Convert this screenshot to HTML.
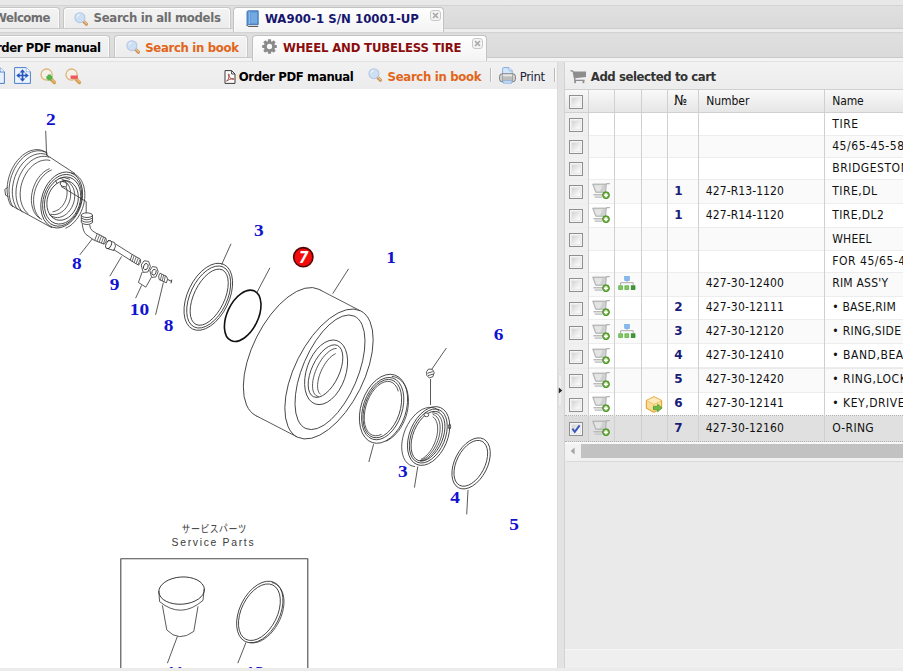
<!DOCTYPE html>
<html lang="en">
<head>
<meta charset="utf-8">
<title>WA900-1 S/N 10001-UP - WHEEL AND TUBELESS TIRE</title>
<style>
html,body{margin:0;padding:0;}
body{width:903px;height:671px;overflow:hidden;background:#e4e4e4;position:relative;font-family:'DejaVu Sans Condensed','Liberation Sans',sans-serif;}
div,span,svg{position:absolute;box-sizing:border-box;}
.t{white-space:nowrap;line-height:20px;height:20px;}
.b{font-weight:bold;font-size:13px;}
.r{font-size:12px;color:#111;}
.n{font-family:'DejaVu Sans','Liberation Sans',sans-serif;font-weight:bold;font-size:12px;color:#1b1b78;}
.tab{border:1px solid #c6c6c6;border-bottom-color:#cbcbcb;border-radius:4px 4px 0 0;background:linear-gradient(#f3f3f3,#ececec);box-shadow:inset 0 1px 0 #fff, inset 1px 0 0 #fafafa, inset -1px 0 0 #fafafa;}
.tab.act{background:linear-gradient(#ffffff,#f3f3f3);border-color:#c2c2c2;border-bottom:none;}
.cls{width:11px;height:11px;border:1px solid #c9c9c9;border-radius:3px;background:#f4f4f4;}
.cb{width:14px;height:14px;border:1px solid #8f8f8f;background:#f4f4f4;}
.cb:before{content:"";position:absolute;left:1px;top:1px;right:1px;bottom:1px;border:1px solid #e9e9e9;background:linear-gradient(135deg,#d2d2d2 0%,#f7f7f7 80%);}
.vl{width:1px;background:#d0d0d0;}
.hl{height:1px;background:#ededed;}
.sep{width:1px;height:14px;background:#b9b9b9;box-shadow:1px 0 0 #fafafa;}
</style>
</head>
<body>
<div style="left:0;top:0;width:903px;height:6px;background:#e8e8e8;border-bottom:1px solid #d3d3d3"></div>
<div style="left:0;top:6px;width:903px;height:23px;background:linear-gradient(#e0e0e0,#dadada);border-bottom:1px solid #cdcdcd"></div>
<div style="left:0;top:29px;width:903px;height:3px;background:#ededed"></div>
<div style="left:0;top:32px;width:903px;height:2px;background:#d4d4d4;border-bottom:1px solid #dcdcdc"></div>
<div style="left:0;top:34px;width:903px;height:24px;background:linear-gradient(#e0e0e0,#dadada);border-bottom:1px solid #c9c9c9"></div>
<div style="left:0;top:58px;width:903px;height:4px;background:#f4f4f4;border-bottom:1px solid #e2e2e2"></div>
<div class="tab" style="left:-20px;top:7px;width:80px;height:22px"></div>
<div class="tab" style="left:63px;top:7px;width:168px;height:22px"></div>
<div class="tab act" style="left:233px;top:7px;width:211px;height:25px"></div>
<div class="tab" style="left:-20px;top:35px;width:130px;height:23px"></div>
<div class="tab" style="left:114px;top:35px;width:134px;height:23px"></div>
<div class="tab act" style="left:252px;top:35px;width:235px;height:26px"></div>
<div class="cls" style="left:430px;top:10px"><svg width="9" height="9" viewBox="0 0 9 9" style="left:0;top:0"><path d="M2 2L7 7M7 2L2 7" stroke="#a9a9a9" stroke-width="1.7" fill="none"/></svg></div>
<div class="cls" style="left:472px;top:38px"><svg width="9" height="9" viewBox="0 0 9 9" style="left:0;top:0"><path d="M2 2L7 7M7 2L2 7" stroke="#a9a9a9" stroke-width="1.7" fill="none"/></svg></div>
<div style="left:0;top:62px;width:557px;height:27px;background:linear-gradient(#f1f1f1,#ececec)"></div>
<div style="left:0;top:89px;width:557px;height:579px;background:#fff"></div>
<div class="sep" style="left:490px;top:68px"></div>
<div class="sep" style="left:554px;top:68px"></div>
<div style="left:557px;top:62px;width:7px;height:606px;background:#e3e3e3;border-left:1px solid #dadada"></div>
<div style="left:564px;top:62px;width:339px;height:606px;background:#eaeaea;border-left:1px solid #d3d3d3"></div><div style="left:565px;top:649px;width:338px;height:19px;background:#efefef;border-top:1px solid #f6f6f6"></div>
<div style="left:565px;top:62px;width:338px;height:27px;background:linear-gradient(#f3f3f3,#ececec)"></div>
<div style="left:565px;top:89px;width:338px;height:24px;background:linear-gradient(#f9f9f9,#e6e6e6);border-top:1px solid #d0d0d0;border-bottom:1px solid #d0d0d0"></div>
<div style="left:565px;top:113px;width:338px;height:22.5px;background:#fff;border-bottom:1px solid #ededed"></div>
<div style="left:565px;top:113px;width:23px;height:21.5px;background:#f0f0f0"></div>
<div class="cb" style="left:569px;top:118px"></div>
<div style="left:565px;top:135.5px;width:338px;height:22px;background:#fafafa;border-bottom:1px solid #ededed"></div>
<div style="left:565px;top:135.5px;width:23px;height:21px;background:#f0f0f0"></div>
<div class="cb" style="left:569px;top:140px"></div>
<div style="left:565px;top:157.5px;width:338px;height:22.2px;background:#fff;border-bottom:1px solid #ededed"></div>
<div style="left:565px;top:157.5px;width:23px;height:21.2px;background:#f0f0f0"></div>
<div class="cb" style="left:569px;top:162px"></div>
<div style="left:565px;top:179.7px;width:338px;height:23.9px;background:#fafafa;border-bottom:1px solid #ededed"></div>
<div style="left:565px;top:179.7px;width:23px;height:22.9px;background:#f0f0f0"></div>
<div class="cb" style="left:569px;top:185px"></div>
<svg style="left:591.5px;top:183px" width="18" height="17" viewBox="0 0 18 17"><path d="M0.7 1.1H14.3L13.6 9.3H3.7Z" fill="#cfd0cf" stroke="#a9aba9" stroke-width="0.9" stroke-linejoin="round"/><path d="M2.2 2.2H10.5L8 8.2H4.4Z" fill="#e4e5e4"/><path d="M14 1.6L15 0.5H17.3" stroke="#b3b5b3" stroke-width="1.4" fill="none" stroke-linecap="round"/><path d="M2 11.7H12.6" stroke="#b9bbb9" stroke-width="1.6" stroke-linecap="round"/><path d="M3.2 14.1H9.6" stroke="#c9cbc9" stroke-width="1.6" stroke-linecap="round"/><circle cx="14" cy="12.2" r="3.4" fill="#78b848" stroke="#4a8a26" stroke-width="1"/><path d="M14 10.2V14.2M12 12.2H16" stroke="#fff" stroke-width="1.5"/></svg>
<div style="left:565px;top:203.6px;width:338px;height:24.4px;background:#fff;border-bottom:1px solid #ededed"></div>
<div style="left:565px;top:203.6px;width:23px;height:23.4px;background:#f0f0f0"></div>
<div class="cb" style="left:569px;top:209px"></div>
<svg style="left:591.5px;top:207px" width="18" height="17" viewBox="0 0 18 17"><path d="M0.7 1.1H14.3L13.6 9.3H3.7Z" fill="#cfd0cf" stroke="#a9aba9" stroke-width="0.9" stroke-linejoin="round"/><path d="M2.2 2.2H10.5L8 8.2H4.4Z" fill="#e4e5e4"/><path d="M14 1.6L15 0.5H17.3" stroke="#b3b5b3" stroke-width="1.4" fill="none" stroke-linecap="round"/><path d="M2 11.7H12.6" stroke="#b9bbb9" stroke-width="1.6" stroke-linecap="round"/><path d="M3.2 14.1H9.6" stroke="#c9cbc9" stroke-width="1.6" stroke-linecap="round"/><circle cx="14" cy="12.2" r="3.4" fill="#78b848" stroke="#4a8a26" stroke-width="1"/><path d="M14 10.2V14.2M12 12.2H16" stroke="#fff" stroke-width="1.5"/></svg>
<div style="left:565px;top:228px;width:338px;height:23.1px;background:#fafafa;border-bottom:1px solid #ededed"></div>
<div style="left:565px;top:228px;width:23px;height:22.1px;background:#f0f0f0"></div>
<div class="cb" style="left:569px;top:233px"></div>
<div style="left:565px;top:251.1px;width:338px;height:21.7px;background:#fff;border-bottom:1px solid #ededed"></div>
<div style="left:565px;top:251.1px;width:23px;height:20.7px;background:#f0f0f0"></div>
<div class="cb" style="left:569px;top:255px"></div>
<div style="left:565px;top:272.8px;width:338px;height:23.8px;background:#fafafa;border-bottom:1px solid #ededed"></div>
<div style="left:565px;top:272.8px;width:23px;height:22.8px;background:#f0f0f0"></div>
<div class="cb" style="left:569px;top:278px"></div>
<svg style="left:591.5px;top:276px" width="18" height="17" viewBox="0 0 18 17"><path d="M0.7 1.1H14.3L13.6 9.3H3.7Z" fill="#cfd0cf" stroke="#a9aba9" stroke-width="0.9" stroke-linejoin="round"/><path d="M2.2 2.2H10.5L8 8.2H4.4Z" fill="#e4e5e4"/><path d="M14 1.6L15 0.5H17.3" stroke="#b3b5b3" stroke-width="1.4" fill="none" stroke-linecap="round"/><path d="M2 11.7H12.6" stroke="#b9bbb9" stroke-width="1.6" stroke-linecap="round"/><path d="M3.2 14.1H9.6" stroke="#c9cbc9" stroke-width="1.6" stroke-linecap="round"/><circle cx="14" cy="12.2" r="3.4" fill="#78b848" stroke="#4a8a26" stroke-width="1"/><path d="M14 10.2V14.2M12 12.2H16" stroke="#fff" stroke-width="1.5"/></svg>
<svg style="left:617.7px;top:276px" width="18" height="15" viewBox="0 0 18 15"><rect x="6.7" y="0.4" width="4.6" height="4.2" fill="#86b9f0" stroke="#6a9fe0" stroke-width="0.6"/><path d="M9 4.8V6.6M2.6 9.2V6.7H15.2V9.2" stroke="#ababab" stroke-width="1" fill="none"/><rect x="0.7" y="9.8" width="3.8" height="3.8" fill="#7fc862" stroke="#5aac3e" stroke-width="0.7"/><rect x="6.9" y="9.8" width="3.8" height="3.8" fill="#7fc862" stroke="#5aac3e" stroke-width="0.7"/><rect x="13.2" y="9.8" width="3.8" height="3.8" fill="#3f9a35" stroke="#2f7f28" stroke-width="0.7"/></svg>
<div style="left:565px;top:296.6px;width:338px;height:23.7px;background:#fff;border-bottom:1px solid #ededed"></div>
<div style="left:565px;top:296.6px;width:23px;height:22.7px;background:#f0f0f0"></div>
<div class="cb" style="left:569px;top:302px"></div>
<svg style="left:591.5px;top:300px" width="18" height="17" viewBox="0 0 18 17"><path d="M0.7 1.1H14.3L13.6 9.3H3.7Z" fill="#cfd0cf" stroke="#a9aba9" stroke-width="0.9" stroke-linejoin="round"/><path d="M2.2 2.2H10.5L8 8.2H4.4Z" fill="#e4e5e4"/><path d="M14 1.6L15 0.5H17.3" stroke="#b3b5b3" stroke-width="1.4" fill="none" stroke-linecap="round"/><path d="M2 11.7H12.6" stroke="#b9bbb9" stroke-width="1.6" stroke-linecap="round"/><path d="M3.2 14.1H9.6" stroke="#c9cbc9" stroke-width="1.6" stroke-linecap="round"/><circle cx="14" cy="12.2" r="3.4" fill="#78b848" stroke="#4a8a26" stroke-width="1"/><path d="M14 10.2V14.2M12 12.2H16" stroke="#fff" stroke-width="1.5"/></svg>
<div style="left:565px;top:320.3px;width:338px;height:24.1px;background:#fafafa;border-bottom:1px solid #ededed"></div>
<div style="left:565px;top:320.3px;width:23px;height:23.1px;background:#f0f0f0"></div>
<div class="cb" style="left:569px;top:326px"></div>
<svg style="left:591.5px;top:324px" width="18" height="17" viewBox="0 0 18 17"><path d="M0.7 1.1H14.3L13.6 9.3H3.7Z" fill="#cfd0cf" stroke="#a9aba9" stroke-width="0.9" stroke-linejoin="round"/><path d="M2.2 2.2H10.5L8 8.2H4.4Z" fill="#e4e5e4"/><path d="M14 1.6L15 0.5H17.3" stroke="#b3b5b3" stroke-width="1.4" fill="none" stroke-linecap="round"/><path d="M2 11.7H12.6" stroke="#b9bbb9" stroke-width="1.6" stroke-linecap="round"/><path d="M3.2 14.1H9.6" stroke="#c9cbc9" stroke-width="1.6" stroke-linecap="round"/><circle cx="14" cy="12.2" r="3.4" fill="#78b848" stroke="#4a8a26" stroke-width="1"/><path d="M14 10.2V14.2M12 12.2H16" stroke="#fff" stroke-width="1.5"/></svg>
<svg style="left:617.7px;top:324px" width="18" height="15" viewBox="0 0 18 15"><rect x="6.7" y="0.4" width="4.6" height="4.2" fill="#86b9f0" stroke="#6a9fe0" stroke-width="0.6"/><path d="M9 4.8V6.6M2.6 9.2V6.7H15.2V9.2" stroke="#ababab" stroke-width="1" fill="none"/><rect x="0.7" y="9.8" width="3.8" height="3.8" fill="#7fc862" stroke="#5aac3e" stroke-width="0.7"/><rect x="6.9" y="9.8" width="3.8" height="3.8" fill="#7fc862" stroke="#5aac3e" stroke-width="0.7"/><rect x="13.2" y="9.8" width="3.8" height="3.8" fill="#3f9a35" stroke="#2f7f28" stroke-width="0.7"/></svg>
<div style="left:565px;top:344.4px;width:338px;height:24.1px;background:#fff;border-bottom:1px solid #ededed"></div>
<div style="left:565px;top:344.4px;width:23px;height:23.1px;background:#f0f0f0"></div>
<div class="cb" style="left:569px;top:350px"></div>
<svg style="left:591.5px;top:348px" width="18" height="17" viewBox="0 0 18 17"><path d="M0.7 1.1H14.3L13.6 9.3H3.7Z" fill="#cfd0cf" stroke="#a9aba9" stroke-width="0.9" stroke-linejoin="round"/><path d="M2.2 2.2H10.5L8 8.2H4.4Z" fill="#e4e5e4"/><path d="M14 1.6L15 0.5H17.3" stroke="#b3b5b3" stroke-width="1.4" fill="none" stroke-linecap="round"/><path d="M2 11.7H12.6" stroke="#b9bbb9" stroke-width="1.6" stroke-linecap="round"/><path d="M3.2 14.1H9.6" stroke="#c9cbc9" stroke-width="1.6" stroke-linecap="round"/><circle cx="14" cy="12.2" r="3.4" fill="#78b848" stroke="#4a8a26" stroke-width="1"/><path d="M14 10.2V14.2M12 12.2H16" stroke="#fff" stroke-width="1.5"/></svg>
<div style="left:565px;top:368.5px;width:338px;height:24.1px;background:#fafafa;border-bottom:1px solid #ededed"></div>
<div style="left:565px;top:368.5px;width:23px;height:23.1px;background:#f0f0f0"></div>
<div class="cb" style="left:569px;top:374px"></div>
<svg style="left:591.5px;top:372px" width="18" height="17" viewBox="0 0 18 17"><path d="M0.7 1.1H14.3L13.6 9.3H3.7Z" fill="#cfd0cf" stroke="#a9aba9" stroke-width="0.9" stroke-linejoin="round"/><path d="M2.2 2.2H10.5L8 8.2H4.4Z" fill="#e4e5e4"/><path d="M14 1.6L15 0.5H17.3" stroke="#b3b5b3" stroke-width="1.4" fill="none" stroke-linecap="round"/><path d="M2 11.7H12.6" stroke="#b9bbb9" stroke-width="1.6" stroke-linecap="round"/><path d="M3.2 14.1H9.6" stroke="#c9cbc9" stroke-width="1.6" stroke-linecap="round"/><circle cx="14" cy="12.2" r="3.4" fill="#78b848" stroke="#4a8a26" stroke-width="1"/><path d="M14 10.2V14.2M12 12.2H16" stroke="#fff" stroke-width="1.5"/></svg>
<div style="left:565px;top:392.6px;width:338px;height:23.6px;background:#fff;border-bottom:1px solid #ededed"></div>
<div style="left:565px;top:392.6px;width:23px;height:22.6px;background:#f0f0f0"></div>
<div class="cb" style="left:569px;top:398px"></div>
<svg style="left:591.5px;top:396px" width="18" height="17" viewBox="0 0 18 17"><path d="M0.7 1.1H14.3L13.6 9.3H3.7Z" fill="#cfd0cf" stroke="#a9aba9" stroke-width="0.9" stroke-linejoin="round"/><path d="M2.2 2.2H10.5L8 8.2H4.4Z" fill="#e4e5e4"/><path d="M14 1.6L15 0.5H17.3" stroke="#b3b5b3" stroke-width="1.4" fill="none" stroke-linecap="round"/><path d="M2 11.7H12.6" stroke="#b9bbb9" stroke-width="1.6" stroke-linecap="round"/><path d="M3.2 14.1H9.6" stroke="#c9cbc9" stroke-width="1.6" stroke-linecap="round"/><circle cx="14" cy="12.2" r="3.4" fill="#78b848" stroke="#4a8a26" stroke-width="1"/><path d="M14 10.2V14.2M12 12.2H16" stroke="#fff" stroke-width="1.5"/></svg>
<svg style="left:644.8px;top:396px" width="18" height="17" viewBox="0 0 18 17"><path d="M9 0.8L16.6 4.6V12.2L9 16.2L1.4 12.2V4.6Z" fill="#f9dd97" stroke="#e3a93c" stroke-width="1.2" stroke-linejoin="round"/><path d="M9 0.8L16.6 4.6L9 8.4L1.4 4.6Z" fill="#fcebbf" stroke="#e9b957" stroke-width="0.7"/><path d="M9 8.4V16" stroke="#e9b957" stroke-width="0.7"/><path d="M8.4 10.4H12.6V8.2L17 12L12.6 15.8V13.6H8.4Z" fill="#6cb947" stroke="#4d9a2c" stroke-width="0.8" stroke-linejoin="round"/></svg>
<div style="left:565px;top:416.2px;width:338px;height:25.4px;background:#e0e0e0;border-bottom:1px dotted #b0b0b0"></div>
<div style="left:565px;top:415.2px;width:338px;height:1px;border-top:1px dotted #b0b0b0"></div>
<div style="left:565px;top:416.2px;width:23px;height:24.4px;background:#dcdcdc"></div>
<div class="cb" style="left:569px;top:422px"></div>
<svg style="left:591.5px;top:420px" width="18" height="17" viewBox="0 0 18 17"><path d="M0.7 1.1H14.3L13.6 9.3H3.7Z" fill="#cfd0cf" stroke="#a9aba9" stroke-width="0.9" stroke-linejoin="round"/><path d="M2.2 2.2H10.5L8 8.2H4.4Z" fill="#e4e5e4"/><path d="M14 1.6L15 0.5H17.3" stroke="#b3b5b3" stroke-width="1.4" fill="none" stroke-linecap="round"/><path d="M2 11.7H12.6" stroke="#b9bbb9" stroke-width="1.6" stroke-linecap="round"/><path d="M3.2 14.1H9.6" stroke="#c9cbc9" stroke-width="1.6" stroke-linecap="round"/><circle cx="14" cy="12.2" r="3.4" fill="#78b848" stroke="#4a8a26" stroke-width="1"/><path d="M14 10.2V14.2M12 12.2H16" stroke="#fff" stroke-width="1.5"/></svg>
<svg style="left:569px;top:422px" width="14" height="14" viewBox="0 0 14 14"><path d="M3.4 6.6L5.8 9.8L10.6 3.4" stroke="#3a57b8" stroke-width="1.9" fill="none"/></svg>
<div class="cb" style="left:569px;top:95px"></div>
<div class="vl" style="left:588px;top:90px;height:351px"></div>
<div class="vl" style="left:614px;top:90px;height:351px"></div>
<div class="vl" style="left:641px;top:90px;height:351px"></div>
<div class="vl" style="left:667px;top:90px;height:351px"></div>
<div class="vl" style="left:698px;top:90px;height:351px"></div>
<div class="vl" style="left:824px;top:90px;height:351px"></div>
<div style="left:565px;top:442px;width:338px;height:2px;background:#f8f8f8"></div>
<div style="left:565px;top:443.5px;width:338px;height:14px;background:#c2c2c2"></div>
<div style="left:565px;top:443.5px;width:16px;height:14px;background:#f2f2f2"></div>
<svg style="left:569.6px;top:446.5px" width="6" height="8" viewBox="0 0 6 8"><path d="M4.6 0.4L0.6 4L4.6 7.6Z" fill="#a6a6a6"/></svg>
<div style="left:565px;top:457.5px;width:338px;height:3px;background:#f1f1f1"></div>
<div style="left:566px;top:460.5px;width:337px;height:1px;background:#d9d9d9"></div>
<div style="left:0;top:668px;width:903px;height:3px;background:#ebebeb"></div>
<svg style="left:558px;top:373px" width="5" height="35" viewBox="0 0 5 35"><path d="M0.5 0.5L3.8 3.5V31.5L0.5 34.5Z" fill="#eeeeee" stroke="#d6d6d6" stroke-width="0.6"/><path d="M0.8 14.5L4.2 17.5L0.8 20.5Z" fill="#222"/></svg>
<svg style="left:74px;top:11.5px" width="15" height="14" viewBox="0 0 15 14"><path d="M9.6 9.4L12.4 12.2" stroke="#c98f52" stroke-width="3.2" stroke-linecap="round"/><path d="M10 9.2L12.8 12" stroke="#ecc692" stroke-width="1.1" stroke-linecap="round"/><circle cx="5.9" cy="5.7" r="5" fill="#cddff3" stroke="#b4c8e6" stroke-width="1.1"/><path d="M2.9 5.4A3.1 3.1 0 0 1 5.8 2.6" stroke="#e9f1fa" stroke-width="1.2" fill="none"/></svg>
<svg style="left:126px;top:40px" width="15" height="14" viewBox="0 0 15 14"><path d="M9.6 9.4L12.4 12.2" stroke="#c98f52" stroke-width="3.2" stroke-linecap="round"/><path d="M10 9.2L12.8 12" stroke="#ecc692" stroke-width="1.1" stroke-linecap="round"/><circle cx="5.9" cy="5.7" r="5" fill="#cddff3" stroke="#b4c8e6" stroke-width="1.1"/><path d="M2.9 5.4A3.1 3.1 0 0 1 5.8 2.6" stroke="#e9f1fa" stroke-width="1.2" fill="none"/></svg>
<svg style="left:368.3px;top:68.3px" width="15" height="14" viewBox="0 0 15 14"><path d="M9.6 9.4L12.4 12.2" stroke="#c98f52" stroke-width="3.2" stroke-linecap="round"/><path d="M10 9.2L12.8 12" stroke="#ecc692" stroke-width="1.1" stroke-linecap="round"/><circle cx="5.9" cy="5.7" r="5" fill="#cddff3" stroke="#b4c8e6" stroke-width="1.1"/><path d="M2.9 5.4A3.1 3.1 0 0 1 5.8 2.6" stroke="#e9f1fa" stroke-width="1.2" fill="none"/></svg>
<svg style="left:245.5px;top:10px" width="13" height="17" viewBox="0 0 13 17"><path d="M1 2.2Q1 0.8 2.4 0.8H12.2V14.6H2.6Q1 14.6 1 15.6Z" fill="#5d97d6" stroke="#3b6fb2" stroke-width="0.9"/><path d="M3.4 1.4V14" stroke="#8ab8ea" stroke-width="1.2"/><rect x="4.6" y="2.6" width="6.4" height="10.6" fill="#74a9e2"/><path d="M1.2 15.4Q1.6 16.4 2.8 16.4H12.2" stroke="#4a4a4a" stroke-width="1" fill="none"/></svg>
<svg style="left:261.5px;top:38.5px" width="15" height="15" viewBox="0 0 15 15"><g transform="translate(7.5 7.5)"><rect x="-1.6" y="-7.3" width="3.2" height="3.4" rx="0.5" transform="rotate(0)" fill="#8a8a8a"/><rect x="-1.6" y="-7.3" width="3.2" height="3.4" rx="0.5" transform="rotate(45)" fill="#8a8a8a"/><rect x="-1.6" y="-7.3" width="3.2" height="3.4" rx="0.5" transform="rotate(90)" fill="#8a8a8a"/><rect x="-1.6" y="-7.3" width="3.2" height="3.4" rx="0.5" transform="rotate(135)" fill="#8a8a8a"/><rect x="-1.6" y="-7.3" width="3.2" height="3.4" rx="0.5" transform="rotate(180)" fill="#8a8a8a"/><rect x="-1.6" y="-7.3" width="3.2" height="3.4" rx="0.5" transform="rotate(225)" fill="#8a8a8a"/><rect x="-1.6" y="-7.3" width="3.2" height="3.4" rx="0.5" transform="rotate(270)" fill="#8a8a8a"/><rect x="-1.6" y="-7.3" width="3.2" height="3.4" rx="0.5" transform="rotate(315)" fill="#8a8a8a"/><circle r="4.1" fill="none" stroke="#8a8a8a" stroke-width="2.9"/></g></svg>
<svg style="left:223.6px;top:69.6px" width="12" height="14" viewBox="0 0 12 14"><path d="M1 0.6H7.6L11 4V13.4H1Z" fill="#fbfbfb" stroke="#3c3c3c" stroke-width="1"/><path d="M7.6 0.6V4H11" fill="none" stroke="#3c3c3c" stroke-width="0.9"/><path d="M2.6 11.2C4.4 9.6 5.6 6.6 5.2 4.4C5 3.6 4.2 3.8 4.4 4.8C4.8 7.2 7 9.2 9.4 9.4C10.4 9.5 10.2 8.6 9.2 8.6C7 8.6 4 10 2.6 11.2Z" fill="none" stroke="#9a2a2a" stroke-width="0.8"/></svg>
<svg style="left:499px;top:67px" width="17" height="17" viewBox="0 0 17 17"><path d="M3.6 8V1.4Q3.6 0.6 4.4 0.6H10L13.2 3.8V8Z" fill="#d4e6fa" stroke="#7ba7dc" stroke-width="0.9"/><path d="M10 0.8V3.8H13" fill="#eef5fd" stroke="#7ba7dc" stroke-width="0.7"/><rect x="0.6" y="6.8" width="15.8" height="8" rx="2.6" fill="#d9d9d9" stroke="#6e6e6e" stroke-width="0.9"/><rect x="3.4" y="7.4" width="10.2" height="6.6" fill="#bdbdbd"/><rect x="3.4" y="7.4" width="10.2" height="2" fill="#e6e6e6"/><path d="M3.4 7.2V14.2M13.6 7.2V14.2" stroke="#8c8c8c" stroke-width="0.7"/><path d="M3.8 13.8H13.2L12.6 16.2H4.4Z" fill="#d4e6fa" stroke="#7ba7dc" stroke-width="0.8"/></svg>
<svg style="left:569.6px;top:69.6px" width="17" height="14" viewBox="0 0 17 14"><path d="M0.4 0.9H2.6L3.4 2.2" stroke="#8d8d8d" stroke-width="1.2" fill="none"/><path d="M3 1.6H16V7L4.6 8.2Z" fill="#8d8d8d"/><path d="M3.4 2.4L5 10.4H14.6" stroke="#8d8d8d" stroke-width="1.4" fill="none"/><rect x="4.2" y="10.4" width="1.7" height="2.8" fill="#8d8d8d"/><rect x="12.6" y="10.4" width="1.7" height="2.8" fill="#8d8d8d"/></svg>
<svg style="left:-8.6px;top:67px" width="14" height="17" viewBox="0 0 14 17"><path d="M0.6 0.6H9L13.4 5V16.4H0.6Z" fill="#e7f0fc" stroke="#4d7fcb" stroke-width="1"/><path d="M9 0.6V5H13.4" fill="#f6faff" stroke="#4d7fcb" stroke-width="0.9"/></svg>
<svg style="left:14px;top:67px" width="17" height="17" viewBox="0 0 17 17"><path d="M0.6 0.6H12.2L16.4 4.8V16.4H0.6Z" fill="#edf4fd" stroke="#4d7fcb" stroke-width="1"/><path d="M12.2 0.6V4.8H16.4" fill="#f8fbff" stroke="#8fb0e0" stroke-width="0.8"/><path d="M8.5 4.2V12.8M4.2 8.5H12.8" stroke="#2458be" stroke-width="1.7"/><path d="M8.5 2.2L11.3 5.6H5.7ZM8.5 14.8L11.3 11.4H5.7ZM2.2 8.5L5.6 5.7V11.3ZM14.8 8.5L11.4 5.7V11.3Z" fill="#2458be"/></svg>
<svg style="left:40px;top:67.6px" width="17" height="17" viewBox="0 0 17 17"><path d="M11.2 11.2L14.4 14.4" stroke="#d89c50" stroke-width="3.6" stroke-linecap="round"/><path d="M11.4 10.8L14.8 14.2" stroke="#f0cc96" stroke-width="1" stroke-linecap="round"/><circle cx="6.6" cy="6.6" r="5.6" fill="#f4f1ea" stroke="#dbb67c" stroke-width="1.3"/><path d="M9.4 6.6V12.6M6.4 9.6H12.4" stroke="#55b34a" stroke-width="3.4"/></svg>
<svg style="left:65px;top:67.6px" width="17" height="17" viewBox="0 0 17 17"><path d="M11.2 11.2L14.4 14.4" stroke="#d89c50" stroke-width="3.6" stroke-linecap="round"/><path d="M11.4 10.8L14.8 14.2" stroke="#f0cc96" stroke-width="1" stroke-linecap="round"/><circle cx="6.6" cy="6.6" r="5.6" fill="#f4f1ea" stroke="#dbb67c" stroke-width="1.3"/><path d="M5.6 9.2H12.8" stroke="#f0565f" stroke-width="3.4"/></svg>
<svg style="left:0;top:89px" width="557" height="578.5" viewBox="0 89 557 578.5"><ellipse cx="287.5" cy="352.5" rx="34.5" ry="70.6" transform="rotate(26.6 287.5 352.5)" fill="#fff" stroke="#303030" stroke-width="0.8" /><path d="M297.2 437.0 L255.7 415.5 L319.2 289.5 L360.7 311.0 Z" fill="#fff" stroke="none"/><path d="M297.2 437.0 L255.7 415.5" stroke="#303030" stroke-width="0.8" fill="none"/><path d="M360.7 311.0 L319.2 289.5" stroke="#303030" stroke-width="0.8" fill="none"/><ellipse cx="329.0" cy="374.0" rx="34.5" ry="70.6" transform="rotate(26.6 329.0 374.0)" fill="#fff" stroke="#303030" stroke-width="0.8" /><ellipse cx="330.0" cy="372.3" rx="27.6" ry="61.2" transform="rotate(23.2 330.0 372.3)" fill="none" stroke="#303030" stroke-width="0.8" /><ellipse cx="326.1" cy="372.3" rx="19.6" ry="33.5" transform="rotate(19.1 326.1 372.3)" fill="none" stroke="#303030" stroke-width="0.8" /><ellipse cx="325.5" cy="371.1" rx="13.8" ry="28.3" transform="rotate(25.1 325.5 371.1)" fill="none" stroke="#303030" stroke-width="0.8" /><path d="M318.7 396.6 L317.2 396.2 L315.8 395.4 L314.7 394.2 L313.8 392.7 L313.1 390.8 L312.7 388.6 L312.5 386.2 L312.6 383.5 L312.9 380.7 L313.5 377.7 L314.3 374.7 L315.3 371.6 L316.6 368.5 L318.0 365.5 L319.6 362.6 L321.3 359.9 L323.2 357.3 L325.1 355.1 L327.1 353.1 L329.1 351.4 L331.1 350.1 L333.0 349.1 L334.9 348.6 L336.6 348.4" fill="none" stroke="#303030" stroke-width="0.8"/><path d="M320.5 394.3 L319.6 393.5 L318.9 392.5 L318.4 391.3 L317.9 389.8 L317.7 388.2 L317.6 386.4 L317.6 384.5 L317.8 382.4 L318.2 380.3 L318.7 378.0 L319.3 375.8 L320.1 373.5 L321.1 371.2 L322.1 368.9 L323.3 366.7 L324.5 364.6 L325.8 362.7 L327.2 360.8 L328.6 359.1 L330.0 357.6 L331.5 356.3 L332.9 355.2 L334.4 354.3 L335.7 353.6" fill="none" stroke="#303030" stroke-width="0.8"/><path d="M348.6 268.8 L332.7 293.7" stroke="#303030" stroke-width="0.8" fill="none"/><ellipse cx="208.3" cy="296.8" rx="20.7" ry="35.9" transform="rotate(25.8 208.3 296.8)" fill="none" stroke="#303030" stroke-width="0.8" /><ellipse cx="208.7" cy="297.0" rx="18.4" ry="33.3" transform="rotate(25.8 208.7 297.0)" fill="none" stroke="#303030" stroke-width="0.8" /><ellipse cx="209.2" cy="297.2" rx="15.3" ry="30.3" transform="rotate(25.8 209.2 297.2)" fill="none" stroke="#303030" stroke-width="0.8" /><path d="M231.0 243.8 L221.6 264.6" stroke="#303030" stroke-width="0.8" fill="none"/><ellipse cx="242.7" cy="315.8" rx="15.5" ry="27.4" transform="rotate(25.4 242.7 315.8)" fill="none" stroke="#111" stroke-width="1.6" /><path d="M269.9 267.8 L257.0 292.3" stroke="#303030" stroke-width="0.8" fill="none"/><circle cx="303.3" cy="257.2" r="9.6" fill="#f40b0b" stroke="#520606" stroke-width="1.6"/><text transform="translate(303.5 263.1) scale(0.84 1)" text-anchor="middle" font-family="'DejaVu Sans','Liberation Sans',sans-serif" font-weight="bold" font-style="italic" font-size="16.6" fill="#fff">7</text><ellipse cx="383.5" cy="408.8" rx="22.5" ry="35.6" transform="rotate(18.5 383.5 408.8)" fill="none" stroke="#303030" stroke-width="0.8" /><ellipse cx="382.7" cy="408.6" rx="19.5" ry="32.2" transform="rotate(18.5 382.7 408.6)" fill="none" stroke="#303030" stroke-width="0.8" /><ellipse cx="382.3" cy="408.6" rx="17.7" ry="30.2" transform="rotate(18.5 382.3 408.6)" fill="none" stroke="#303030" stroke-width="0.8" /><path d="M381.5 434.3 L378.4 435.5 L375.3 435.8 L372.5 435.2 L369.9 433.8 L367.8 431.5 L366.1 428.4 L364.9 424.7 L364.3 420.5 L364.3 415.9 L364.8 411.0 L365.9 406.1 L367.5 401.2 L369.6 396.6 L372.1 392.4 L374.9 388.7 L377.9 385.7 L381.1 383.4 L384.3 382.0 L387.4 381.4 L390.3 381.7 L392.9 382.9 L395.2 385.0 L397.0 387.8 L398.3 391.4" fill="none" stroke="#303030" stroke-width="0.8"/><path d="M391.8 376.4 L394.4 376.8 L396.8 377.6 L399.1 378.9 L401.2 380.6 L403.1 382.6 L404.7 385.1 L406.1 387.8 L407.2 390.9 L407.9 394.2 L408.4 397.7 L408.5 401.4 L408.3 405.2 L407.8 409.0 L407.0 412.9 L405.9 416.7 L404.5 420.4 L402.8 424.0 L400.9 427.4 L398.8 430.5 L396.4 433.3 L394.0 435.9 L391.3 438.0 L388.7 439.8 L385.9 441.2" fill="none" stroke="#303030" stroke-width="0.8"/><path d="M373.6 444.2 L368.8 462.0" stroke="#303030" stroke-width="0.8" fill="none"/><path d="M415.1 466.6 L412.2 466.0 L409.6 464.9 L407.2 463.0 L405.2 460.6 L403.7 457.7 L402.5 454.2 L401.9 450.4 L401.7 446.3 L402.0 441.9 L402.8 437.5 L404.0 433.0 L405.7 428.6 L407.8 424.4 L410.2 420.5 L413.0 417.0 L415.9 413.9 L419.0 411.4 L422.2 409.4 L425.5 408.1 L428.6 407.4 L431.7 407.4 L434.5 408.1 L437.1 409.4 L439.4 411.4" fill="none" stroke="#303030" stroke-width="0.8"/><ellipse cx="428.6" cy="436.0" rx="19.0" ry="30.8" transform="rotate(22.5 428.6 436.0)" fill="none" stroke="#303030" stroke-width="0.8" /><ellipse cx="428.3" cy="436.0" rx="16.8" ry="28.4" transform="rotate(22.5 428.3 436.0)" fill="none" stroke="#303030" stroke-width="0.8" /><ellipse cx="428.0" cy="436.2" rx="14.8" ry="26.2" transform="rotate(22.5 428.0 436.2)" fill="none" stroke="#303030" stroke-width="0.8" /><path d="M432.2 412.8 L434.2 412.9 L436.0 413.4 L437.6 414.3 L439.0 415.6 L440.2 417.3 L441.2 419.3 L441.9 421.6 L442.4 424.1 L442.6 426.9 L442.5 429.8 L442.1 432.9 L441.5 436.0 L440.5 439.2 L439.4 442.3 L438.0 445.3 L436.4 448.2 L434.7 450.8 L432.8 453.3 L430.8 455.4 L428.7 457.3 L426.5 458.8 L424.4 459.9 L422.3 460.6 L420.3 460.9" fill="none" stroke="#303030" stroke-width="0.8"/><path d="M432.7 414.4 L434.3 414.9 L435.7 415.8 L436.9 417.0 L437.9 418.5 L438.8 420.2 L439.5 422.2 L439.9 424.4 L440.1 426.8 L440.1 429.4 L439.9 432.1 L439.4 434.8 L438.8 437.6 L437.9 440.4 L436.8 443.2 L435.6 445.8 L434.2 448.4 L432.6 450.7 L431.0 452.9 L429.2 454.9 L427.4 456.6 L425.5 458.1 L423.6 459.2 L421.8 460.1 L419.9 460.6" fill="none" stroke="#303030" stroke-width="0.8"/><path d="M432.7 416.8 L433.8 417.6 L434.8 418.7 L435.7 420.0 L436.4 421.5 L437.0 423.1 L437.4 425.0 L437.6 426.9 L437.7 429.0 L437.6 431.2 L437.3 433.5 L436.9 435.8 L436.3 438.2 L435.6 440.5 L434.7 442.9 L433.7 445.1 L432.6 447.3 L431.4 449.4 L430.0 451.4 L428.6 453.2 L427.1 454.8 L425.6 456.3 L424.0 457.6 L422.4 458.6 L420.9 459.4" fill="none" stroke="#303030" stroke-width="0.8"/><ellipse cx="426.4" cy="414.8" rx="2.4" ry="1.9" fill="#fff" stroke="#303030" stroke-width="0.8"/><ellipse cx="449.6" cy="426.6" rx="1.1" ry="2.6" fill="none" stroke="#303030" stroke-width="0.8"/><path d="M417.8 466.4 L414.4 487.6" stroke="#303030" stroke-width="0.8" fill="none"/><path d="M426.6 371.6L428.6 369L432.4 369.4L434.2 372.4L433 376.6L429.4 378L426.8 375.4Z" stroke="#303030" stroke-width="0.8" fill="#fff" stroke-linejoin="round"/><path d="M427.6 373.2L432.8 371.6M428 375.6L433.4 374" stroke="#303030" stroke-width="0.8" fill="none" stroke-linejoin="round"/><path d="M446.4 348.0 L431.8 369.2" stroke="#303030" stroke-width="0.8" fill="none"/><path d="M430.5 379.0 L430.5 405.0" stroke="#303030" stroke-width="0.8" fill="none"/><ellipse cx="471.1" cy="463.4" rx="16.4" ry="27.4" transform="rotate(27.0 471.1 463.4)" fill="none" stroke="#303030" stroke-width="0.8" /><ellipse cx="470.8" cy="463.3" rx="14.1" ry="24.7" transform="rotate(27.0 470.8 463.3)" fill="none" stroke="#303030" stroke-width="0.8" /><path d="M468.0 490.0 L466.7 514.4" stroke="#303030" stroke-width="0.8" fill="none"/><text transform="translate(46.0 125.0) scale(1.14 1)" font-family="'Liberation Serif','DejaVu Serif',serif" font-weight="bold" font-size="17" fill="#1212cf">2</text><text transform="translate(254.0 236.2) scale(1.14 1)" font-family="'Liberation Serif','DejaVu Serif',serif" font-weight="bold" font-size="17" fill="#1212cf">3</text><text transform="translate(386.3 263.0) scale(1.14 1)" font-family="'Liberation Serif','DejaVu Serif',serif" font-weight="bold" font-size="17" fill="#1212cf">1</text><text transform="translate(493.7 340.4) scale(1.14 1)" font-family="'Liberation Serif','DejaVu Serif',serif" font-weight="bold" font-size="17" fill="#1212cf">6</text><text transform="translate(397.9 477.0) scale(1.14 1)" font-family="'Liberation Serif','DejaVu Serif',serif" font-weight="bold" font-size="17" fill="#1212cf">3</text><text transform="translate(450.3 502.6) scale(1.14 1)" font-family="'Liberation Serif','DejaVu Serif',serif" font-weight="bold" font-size="17" fill="#1212cf">4</text><text transform="translate(509.3 529.6) scale(1.14 1)" font-family="'Liberation Serif','DejaVu Serif',serif" font-weight="bold" font-size="17" fill="#1212cf">5</text><text transform="translate(72.1 269.2) scale(1.14 1)" font-family="'Liberation Serif','DejaVu Serif',serif" font-weight="bold" font-size="17" fill="#1212cf">8</text><text transform="translate(109.7 289.6) scale(1.14 1)" font-family="'Liberation Serif','DejaVu Serif',serif" font-weight="bold" font-size="17" fill="#1212cf">9</text><text transform="translate(129.7 314.8) scale(1.14 1)" font-family="'Liberation Serif','DejaVu Serif',serif" font-weight="bold" font-size="17" fill="#1212cf">10</text><text transform="translate(163.7 330.6) scale(1.14 1)" font-family="'Liberation Serif','DejaVu Serif',serif" font-weight="bold" font-size="17" fill="#1212cf">8</text><path d="M10.6 205.1 L9.3 202.2 L8.3 199.0 L7.6 195.7 L7.2 192.1 L7.1 188.5 L7.4 184.7 L8.0 180.9 L8.9 177.2 L10.1 173.5 L11.5 169.9 L13.3 166.5 L15.3 163.3 L17.5 160.4 L19.9 157.8 L22.4 155.4 L25.1 153.5 L27.8 151.9 L30.6 150.7 L33.4 150.0 L36.2 149.6 L38.9 149.7 L41.6 150.3 L44.1 151.2 L46.4 152.6" fill="none" stroke="#303030" stroke-width="0.8"/><path d="M12.9 207.0 L11.5 204.2 L10.4 201.1 L9.6 197.8 L9.2 194.3 L9.0 190.7 L9.2 187.0 L9.7 183.2 L10.5 179.4 L11.6 175.7 L13.0 172.1 L14.6 168.6 L16.5 165.4 L18.7 162.4 L21.0 159.6 L23.5 157.2 L26.1 155.1 L28.9 153.4 L31.6 152.1 L34.5 151.3 L37.3 150.8 L40.0 150.8 L42.7 151.2 L45.2 152.0 L47.6 153.3" fill="none" stroke="#303030" stroke-width="0.8"/><path d="M17.6 209.5 L16.0 207.1 L14.7 204.3 L13.6 201.3 L12.9 198.1 L12.4 194.7 L12.3 191.1 L12.5 187.5 L13.1 183.9 L13.9 180.2 L15.0 176.6 L16.4 173.2 L18.1 169.9 L20.0 166.8 L22.1 163.9 L24.5 161.4 L26.9 159.1 L29.5 157.2 L32.2 155.7 L34.9 154.6 L37.7 153.9 L40.4 153.6 L43.0 153.7 L45.6 154.3 L48.0 155.2" fill="none" stroke="#303030" stroke-width="0.8"/><path d="M22.7 212.3 L20.9 210.2 L19.4 207.8 L18.1 205.0 L17.1 202.1 L16.4 198.8 L16.0 195.5 L16.0 192.0 L16.2 188.4 L16.8 184.8 L17.7 181.3 L18.8 177.8 L20.3 174.4 L22.0 171.2 L23.9 168.3 L26.1 165.6 L28.4 163.1 L30.9 161.0 L33.5 159.3 L36.1 157.9 L38.8 157.0 L41.5 156.4 L44.2 156.3 L46.8 156.6 L49.3 157.3" fill="none" stroke="#303030" stroke-width="0.8"/><path d="M28.4 213.9 L26.4 212.2 L24.7 210.1 L23.3 207.8 L22.1 205.1 L21.1 202.2 L20.5 199.2 L20.2 196.0 L20.2 192.6 L20.5 189.2 L21.1 185.8 L22.0 182.5 L23.2 179.2 L24.6 176.1 L26.3 173.1 L28.2 170.3 L30.3 167.9 L32.6 165.7 L35.0 163.8 L37.5 162.3 L40.1 161.1 L42.7 160.4 L45.3 160.0 L47.8 160.0 L50.2 160.5" fill="none" stroke="#303030" stroke-width="0.8"/><path d="M7.6 187.4L4.8 189.4L5.6 195.2L8.4 196.6" stroke="#303030" stroke-width="0.8" fill="none" stroke-linejoin="round"/><path d="M46.8 155.2 L75.0 173.6" stroke="#303030" stroke-width="0.8" fill="none"/><path d="M10.6 205.1 L52.0 227.8" stroke="#303030" stroke-width="0.8" fill="none"/><path d="M40.0 218.5 L38.3 217.3 L36.9 215.9 L35.5 214.2 L34.4 212.4 L33.4 210.4 L32.6 208.1 L32.0 205.8 L31.6 203.3 L31.4 200.7 L31.4 198.1 L31.6 195.4 L32.1 192.7 L32.7 190.0 L33.5 187.4 L34.5 184.8 L35.7 182.3 L37.0 179.9 L38.5 177.7 L40.1 175.7 L41.8 173.8 L43.7 172.2 L45.6 170.7 L47.6 169.6 L49.6 168.6" fill="none" stroke="#303030" stroke-width="0.8"/><path d="M42.1 219.7 L40.5 218.6 L39.0 217.1 L37.7 215.5 L36.5 213.6 L35.6 211.6 L34.8 209.4 L34.2 207.0 L33.8 204.6 L33.6 202.0 L33.6 199.3 L33.8 196.6 L34.2 193.9 L34.8 191.3 L35.6 188.6 L36.6 186.0 L37.8 183.5 L39.2 181.2 L40.6 179.0 L42.3 176.9 L44.0 175.1 L45.8 173.4 L47.7 172.0 L49.7 170.8 L51.7 169.9" fill="none" stroke="#303030" stroke-width="0.8"/><ellipse cx="61.7" cy="200.0" rx="19.9" ry="28.7" transform="rotate(18.0 61.7 200.0)" fill="#fff" stroke="#303030" stroke-width="0.8" /><ellipse cx="62.2" cy="200.3" rx="18.7" ry="26.5" transform="rotate(18.0 62.2 200.3)" fill="none" stroke="#303030" stroke-width="0.8" /><ellipse cx="62.6" cy="200.5" rx="17.4" ry="24.1" transform="rotate(18.0 62.6 200.5)" fill="none" stroke="#303030" stroke-width="0.8" /><ellipse cx="62.6" cy="200.5" rx="15.2" ry="20.2" transform="rotate(18.0 62.6 200.5)" fill="none" stroke="#303030" stroke-width="0.8" /><path d="M63.0 180.0 L65.2 180.4 L67.3 181.2 L69.2 182.5 L70.8 184.1 L72.2 186.1 L73.4 188.3 L74.1 190.8 L74.6 193.5 L74.7 196.3 L74.5 199.2 L73.9 202.1 L72.9 204.9 L71.7 207.5 L70.2 209.9 L68.4 212.1 L66.4 214.0 L64.3 215.5 L62.0 216.6 L59.7 217.3 L57.4 217.6 L55.2 217.4 L53.0 216.8 L51.0 215.8 L49.2 214.4" fill="none" stroke="#303030" stroke-width="0.8"/><path d="M61.7 179.4 L63.4 180.1 L65.0 181.1 L66.4 182.4 L67.7 183.9 L68.8 185.7 L69.6 187.6 L70.2 189.7 L70.6 191.9 L70.7 194.1 L70.5 196.5 L70.2 198.8 L69.5 201.1 L68.7 203.3 L67.6 205.4 L66.4 207.4 L64.9 209.2 L63.3 210.8 L61.6 212.1 L59.8 213.2 L58.0 213.9 L56.1 214.4 L54.2 214.6 L52.3 214.5 L50.5 214.1" fill="none" stroke="#303030" stroke-width="0.8"/><path d="M62.5 181.0 L63.5 182.1 L64.4 183.3 L65.2 184.6 L65.8 186.0 L66.3 187.5 L66.7 189.0 L67.0 190.7 L67.1 192.4 L67.0 194.1 L66.8 195.8 L66.5 197.5 L66.0 199.2 L65.4 200.8 L64.7 202.4 L63.8 203.9 L62.8 205.3 L61.8 206.6 L60.6 207.8 L59.4 208.9 L58.1 209.8 L56.7 210.5 L55.4 211.1 L53.9 211.6 L52.5 211.8" fill="none" stroke="#303030" stroke-width="0.8"/><path d="M70.9 172.8 L73.1 173.4 L75.2 174.3 L77.1 175.6 L78.9 177.3 L80.5 179.2 L81.8 181.4 L82.9 183.8 L83.8 186.5 L84.4 189.4 L84.8 192.4 L84.8 195.5 L84.7 198.7 L84.2 201.9 L83.5 205.1 L82.5 208.3 L81.3 211.3 L79.9 214.3 L78.2 217.0 L76.4 219.6 L74.4 221.9 L72.3 224.0 L70.1 225.8 L67.7 227.2 L65.4 228.4" fill="none" stroke="#303030" stroke-width="0.8"/><ellipse cx="63.6" cy="184.2" rx="3.6" ry="2.4" fill="#fff" stroke="#2a2a2a" stroke-width="0.8" transform="rotate(25 63.6 184.2)"/><path d="M55.6 180.4L57 183.6M58.6 178.6Q64 176 70 179.4" stroke="#303030" stroke-width="0.8" fill="none" stroke-linejoin="round"/><path d="M45.7 130.8 L46.6 155.5" stroke="#303030" stroke-width="0.8" fill="none"/><path d="M61 186.4L86.2 201.6V213" stroke="#303030" stroke-width="0.8" fill="none" stroke-linejoin="round"/><ellipse cx="86.9" cy="215.2" rx="5.6" ry="2.3" fill="#fff" stroke="#2a2a2a" stroke-width="0.8"/><path d="M81.3 215.2V222.6Q86.9 226.6 92.5 222.6V215.2" stroke="#303030" stroke-width="0.8" fill="none" stroke-linejoin="round"/><path d="M81.3 218Q86.9 221.6 92.5 218M81.3 220.4Q86.9 224 92.5 220.4" stroke="#303030" stroke-width="0.8" fill="none" stroke-linejoin="round"/><path d="M82.2 223.6Q83 231.4 86 234.4L94.6 240.6" stroke="#303030" stroke-width="0.8" fill="none" stroke-linejoin="round"/><path d="M89.6 224.6Q90 229 92.4 230.8L97.4 234" stroke="#303030" stroke-width="0.8" fill="none" stroke-linejoin="round"/><path d="M97.4 233.6L106 238.2Q107.6 241 104.2 244.2L94.6 240.4Z" stroke="#303030" stroke-width="0.8" fill="#fff" stroke-linejoin="round"/><path d="M99.6 234.8L97 241.2M101.6 235.8L99.2 242.2M103.6 236.8L101.4 243.2M105.4 238L103.4 243.8" stroke="#303030" stroke-width="0.7" fill="none" stroke-linejoin="round"/><path d="M92.4 238.8 L79.8 254.8" stroke="#303030" stroke-width="0.8" fill="none"/><path d="M108.4 240.4L114.6 242.6Q116.8 246 113.8 250.6L107.6 248.6Z" stroke="#303030" stroke-width="0.8" fill="#fff" stroke-linejoin="round"/><ellipse cx="108.6" cy="244.6" rx="2.6" ry="4.3" fill="#fff" stroke="#2a2a2a" stroke-width="0.85" transform="rotate(22 108.6 244.6)"/><path d="M115.6 244L132.4 254.6M113.4 249.4L130.4 260.2" stroke="#303030" stroke-width="0.8" fill="none" stroke-linejoin="round"/><path d="M132.2 254.4L140.4 259.2Q141.8 262 138.6 265.2L130.2 260.2Z" stroke="#303030" stroke-width="0.8" fill="#fff" stroke-linejoin="round"/><path d="M134.2 255.8L132 261.4M136.2 257L134 262.6M138.2 258.2L136 263.8M140 259.6L138 264.8" stroke="#303030" stroke-width="0.7" fill="none" stroke-linejoin="round"/><path d="M121.6 256.4 L109.8 276.2" stroke="#303030" stroke-width="0.8" fill="none"/><path d="M141.2 265L144 260.8L148.6 261.4L150.4 266.4L147.8 272L143.2 272.4Z" stroke="#303030" stroke-width="0.8" fill="#fff" stroke-linejoin="round"/><ellipse cx="145.8" cy="266.6" rx="2.2" ry="3.2" fill="#fff" stroke="#2a2a2a" stroke-width="0.8" transform="rotate(20 145.8 266.6)"/><path d="M149.8 270.6L152.4 266.6L156.6 267.2L158.2 271.8L155.8 277L151.6 277.4Z" stroke="#303030" stroke-width="0.8" fill="#fff" stroke-linejoin="round"/><ellipse cx="154" cy="272.2" rx="2" ry="3" fill="#fff" stroke="#2a2a2a" stroke-width="0.8" transform="rotate(20 154 272.2)"/><path d="M142.2 272L138.4 282.4L145.8 287.2L151.2 277.6" stroke="#303030" stroke-width="0.8" fill="none" stroke-linejoin="round"/><path d="M141.6 285.4 L135.6 298.2" stroke="#303030" stroke-width="0.8" fill="none"/><path d="M160 273.2L166.6 276.4Q168.6 279 166.4 282.8L159.2 279.6Q157.6 276 160 273.2Z" stroke="#303030" stroke-width="0.8" fill="#fff" stroke-linejoin="round"/><path d="M161.8 274.2L160.4 280.2M163.6 275L162.2 281M165.4 275.8L164 281.8" stroke="#303030" stroke-width="0.7" fill="none" stroke-linejoin="round"/><path d="M167.6 279.4L171.6 281.4M171.8 279.6L171 283.4" stroke="#303030" stroke-width="0.9" fill="none" stroke-linejoin="round"/><path d="M163.4 282.4 L155.6 314.8" stroke="#303030" stroke-width="0.8" fill="none"/><path d="M120.8 668V558.8H307.8V668" stroke="#4a4a4a" stroke-width="1.1" fill="none" stroke-linejoin="round"/><text transform="translate(181.6 533.4) scale(0.78 1)" font-family="'Liberation Sans','IPAGothic','Noto Sans CJK JP',sans-serif" font-size="11.5" fill="#3a3a3a" textLength="83.5" lengthAdjust="spacing">サービスパーツ</text><text x="171.6" y="546.4" font-family="'Liberation Sans','DejaVu Sans',sans-serif" font-size="10.4" fill="#3a3a3a" textLength="82" lengthAdjust="spacing">Service Parts</text><ellipse cx="181.6" cy="590.6" rx="22.8" ry="13.6" fill="#fff" stroke="#2a2a2a" stroke-width="0.9" transform="rotate(-4 181.6 590.6)"/><path d="M158.8 591L159.6 601.6Q181 619.4 203 600.4L204.2 589" stroke="#303030" stroke-width="0.8" fill="none" stroke-linejoin="round"/><path d="M162.4 605.4L166.8 630Q179 642.6 193.8 631.4L198 606.4" stroke="#303030" stroke-width="0.8" fill="none" stroke-linejoin="round"/><path d="M177.4 636.4 L167.4 663.2" stroke="#303030" stroke-width="0.8" fill="none"/><ellipse cx="259.8" cy="612.0" rx="20.1" ry="32.9" transform="rotate(26.4 259.8 612.0)" fill="none" stroke="#303030" stroke-width="0.8" /><ellipse cx="259.4" cy="612.2" rx="17.9" ry="30.3" transform="rotate(26.4 259.4 612.2)" fill="none" stroke="#303030" stroke-width="0.8" /><path d="M271.8 582.5 L274.4 583.3 L276.7 584.6 L278.8 586.3 L280.5 588.5 L281.9 591.1 L283.0 594.1 L283.7 597.4 L284.0 600.9 L283.9 604.7 L283.3 608.6 L282.5 612.5 L281.2 616.5 L279.6 620.4 L277.6 624.1 L275.4 627.7 L272.9 631.0 L270.3 634.0 L267.4 636.6 L264.5 638.8 L261.5 640.6 L258.4 641.9 L255.4 642.6 L252.5 642.9 L249.8 642.7" fill="none" stroke="#303030" stroke-width="0.8"/><path d="M246.0 642.4 L237.8 663.2" stroke="#303030" stroke-width="0.8" fill="none"/><text transform="translate(165.9 678.0) scale(1.14 1)" font-family="'Liberation Serif','DejaVu Serif',serif" font-weight="bold" font-size="17" fill="#1212cf">11</text><text transform="translate(245.3 678.0) scale(1.14 1)" font-family="'Liberation Serif','DejaVu Serif',serif" font-weight="bold" font-size="17" fill="#1212cf">12</text></svg>
<span class="t b" style="left:-6px;top:8.2px;color:#6e6e6e;letter-spacing:-0.498px;">Welcome</span>
<span class="t b" style="left:93.6px;top:8.2px;color:#6e6e6e;letter-spacing:-0.311px;">Search in all models</span>
<span class="t b" style="left:265px;top:9.4px;color:#16166e;letter-spacing:0.049px;">WA900-1 S/N 10001-UP</span>
<span class="t b" style="left:-13.5px;top:38px;color:#000;letter-spacing:-0.427px;">Order PDF manual</span>
<span class="t b" style="left:145.2px;top:38px;color:#e2661a;letter-spacing:-0.320px;">Search in book</span>
<span class="t b" style="left:283px;top:37.6px;color:#8b0d0d;letter-spacing:-0.174px;">WHEEL AND TUBELESS TIRE</span>
<span class="t b" style="left:238.8px;top:66.8px;color:#000;letter-spacing:-0.389px;">Order PDF manual</span>
<span class="t b" style="left:387.6px;top:66.8px;color:#e2661a;letter-spacing:-0.313px;">Search in book</span>
<span class="t r" style="left:519.8px;top:66.6px;color:#22223a;font-size:13px;letter-spacing:-0.418px;">Print</span>
<span class="t b" style="left:590.8px;top:66.8px;color:#333;letter-spacing:-0.425px;">Add selected to cart</span>
<span class="t r" style="left:832.2px;top:113.8px;letter-spacing:0.602px;">TIRE</span>
<span class="t r" style="left:832.2px;top:135.8px;letter-spacing:0.55px;">45/65-45-58PR</span>
<span class="t r" style="left:832.2px;top:157.9px;letter-spacing:0.55px;">BRIDGESTONE</span>
<span class="t n" style="left:674.3px;top:181.3px;">1</span>
<span class="t r" style="left:705.8px;top:181.3px;letter-spacing:0.091px;">427-R13-1120</span>
<span class="t r" style="left:832.2px;top:181.3px;letter-spacing:0.492px;">TIRE,DL</span>
<span class="t n" style="left:674.3px;top:205.3px;">1</span>
<span class="t r" style="left:705.8px;top:205.3px;letter-spacing:0.091px;">427-R14-1120</span>
<span class="t r" style="left:832.2px;top:205.3px;letter-spacing:0.410px;">TIRE,DL2</span>
<span class="t r" style="left:832.2px;top:229.3px;letter-spacing:0.229px;">WHEEL</span>
<span class="t r" style="left:832.2px;top:251.2px;letter-spacing:0.55px;">FOR 45/65-45-58PR</span>
<span class="t r" style="left:705.8px;top:273.2px;letter-spacing:0.144px;">427-30-12400</span>
<span class="t r" style="left:832.2px;top:273.2px;letter-spacing:0.214px;">RIM ASS'Y</span>
<span class="t n" style="left:674.3px;top:297.2px;">2</span>
<span class="t r" style="left:705.8px;top:297.2px;letter-spacing:0.144px;">427-30-12111</span>
<span class="t r" style="left:832.2px;top:297.2px;letter-spacing:0.211px;">&bull; BASE,RIM</span>
<span class="t n" style="left:674.3px;top:320.9px;">3</span>
<span class="t r" style="left:705.8px;top:320.9px;letter-spacing:0.144px;">427-30-12120</span>
<span class="t r" style="left:832.2px;top:320.9px;letter-spacing:0.324px;">&bull; RING,SIDE</span>
<span class="t n" style="left:674.3px;top:344.9px;">4</span>
<span class="t r" style="left:705.8px;top:344.9px;letter-spacing:0.144px;">427-30-12410</span>
<span class="t r" style="left:832.2px;top:344.9px;letter-spacing:0.55px;">&bull; BAND,BEAD SEAT</span>
<span class="t n" style="left:674.3px;top:369.1px;">5</span>
<span class="t r" style="left:705.8px;top:369.1px;letter-spacing:0.144px;">427-30-12420</span>
<span class="t r" style="left:832.2px;top:369.1px;letter-spacing:0.55px;">&bull; RING,LOCK</span>
<span class="t n" style="left:674.3px;top:393px;">6</span>
<span class="t r" style="left:705.8px;top:393px;letter-spacing:0.144px;">427-30-12141</span>
<span class="t r" style="left:832.2px;top:393px;letter-spacing:0.55px;">&bull; KEY,DRIVER</span>
<span class="t n" style="left:674.3px;top:417.9px;">7</span>
<span class="t r" style="left:705.8px;top:417.9px;letter-spacing:0.144px;">427-30-12160</span>
<span class="t r" style="left:832.2px;top:417.9px;letter-spacing:0.323px;">O-RING</span>
<span class="t r" style="left:674.3px;top:90.4px;font-size:14px;letter-spacing:1.491px;">&#8470;</span>
<span class="t r" style="left:706.3px;top:91.2px;letter-spacing:-0.062px;">Number</span>
<span class="t r" style="left:832.2px;top:91.2px;letter-spacing:-0.090px;">Name</span>
</body>
</html>
